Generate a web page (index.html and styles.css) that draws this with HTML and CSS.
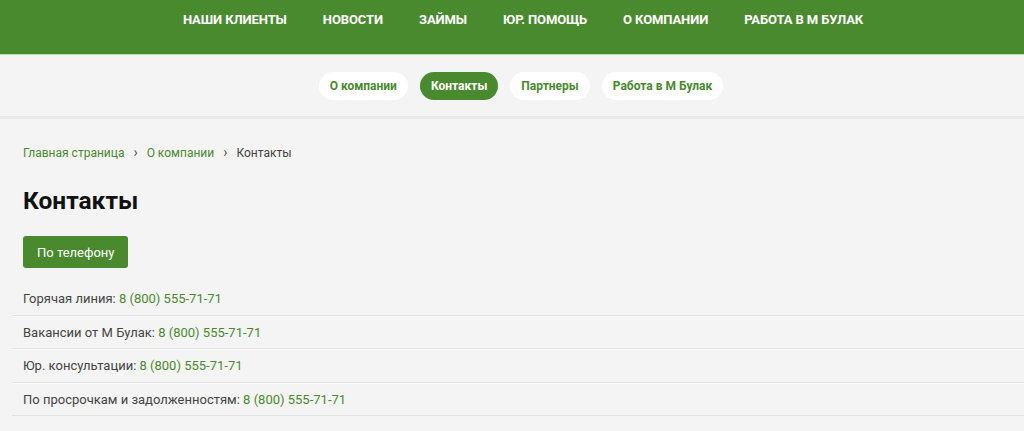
FILE: index.html
```html
<!DOCTYPE html>
<html lang="ru">
<head>
<meta charset="utf-8">
<title>Контакты</title>
<link rel="stylesheet" href="styles.css">
</head>
<body>
<header class="topbar">
  <nav class="mainnav">
    <a href="#">НАШИ КЛИЕНТЫ</a>
    <a href="#">НОВОСТИ</a>
    <a href="#">ЗАЙМЫ</a>
    <a href="#">ЮР. ПОМОЩЬ</a>
    <a href="#">О КОМПАНИИ</a>
    <a href="#">РАБОТА В М БУЛАК</a>
  </nav>
</header>
<div class="subbar">
  <nav class="subnav">
    <a class="pill" href="#">О компании</a>
    <a class="pill active" href="#">Контакты</a>
    <a class="pill" href="#">Партнеры</a>
    <a class="pill" href="#">Работа в М Булак</a>
  </nav>
</div>
<main class="content">
  <div class="crumbs">
    <a href="#">Главная страница</a><span class="sep">›</span><a href="#">О компании</a><span class="sep">›</span><span class="cur">Контакты</span>
  </div>
  <h1 class="title">Контакты</h1>
  <button class="tab">По телефону</button>
  <ul class="rows">
    <li>Горячая линия: <a href="#">8 (800) 555-71-71</a></li>
    <li>Вакансии от М Булак: <a href="#">8 (800) 555-71-71</a></li>
    <li>Юр. консультации: <a href="#">8 (800) 555-71-71</a></li>
    <li>По просрочкам и задолженностям: <a href="#">8 (800) 555-71-71</a></li>
  </ul>
</main>
</body>
</html>
```
FILE: styles.css
```css
* { box-sizing: border-box; }
html, body { margin: 0; padding: 0; }
body {
  background: #f4f4f4;
  font-family: Roboto, "Liberation Sans", Arial, sans-serif;
  color: #444;
  overflow: hidden;
}
a { text-decoration: none; }
.topbar {
  background: #4a8a2f;
  height: 55px;
  border-bottom: 1px solid #b9dba6;
}
.mainnav {
  display: flex;
  justify-content: center;
  gap: 36px;
  padding-top: 12px;
  padding-left: 22px;
}
.mainnav a {
  color: #fff;
  font-weight: 700;
  font-size: 13px;
  line-height: 16px;
  letter-spacing: -0.1px;
}
.subbar {
  height: 64px;
  border-bottom: 3px solid #e9e9e9;
  display: flex;
  align-items: center;
  justify-content: center;
}
.subnav {
  display: flex;
  gap: 12px;
  margin-left: 18px;
  margin-top: 1px;
}
.pill {
  display: inline-flex;
  align-items: center;
  height: 28px;
  padding: 0 11px;
  border-radius: 14px;
  background: #fff;
  color: #4a8a2f;
  font-weight: 700;
  font-size: 12px;
}
.pill.active {
  background: #4a8a2f;
  color: #fff;
}
.content {
  padding-top: 25px;
}
.crumbs {
  padding-left: 23px;
  font-size: 12px;
  line-height: 16px;
  color: #444;
}
.crumbs a { color: #4a8a2f; }
.crumbs .sep {
  display: inline-block;
  margin: 0 9px;
  color: #555;
  font-size: 14px;
}
.title {
  margin: 24px 0 0 23px;
  font-size: 24.5px;
  line-height: 32px;
  font-weight: 700;
  color: #111;
}
.tab {
  display: block;
  margin: 19px 0 0 23px;
  height: 32px;
  padding: 0 14px;
  border: 0;
  border-radius: 3px;
  background: #4a8a2f;
  color: #fff;
  font-family: inherit;
  font-size: 13px;
}
.rows {
  list-style: none;
  margin: 14px 0 0 12px;
  padding: 0;
}
.rows li {
  padding: 9px 0 8px 11px;
  font-size: 13px;
  line-height: 16px;
  border-bottom: 1px solid #e3e3e3;
  box-shadow: 0 1px 0 #fafafa;
  height: 33.5px;
}
.rows a { color: #4a8a2f; }
```
